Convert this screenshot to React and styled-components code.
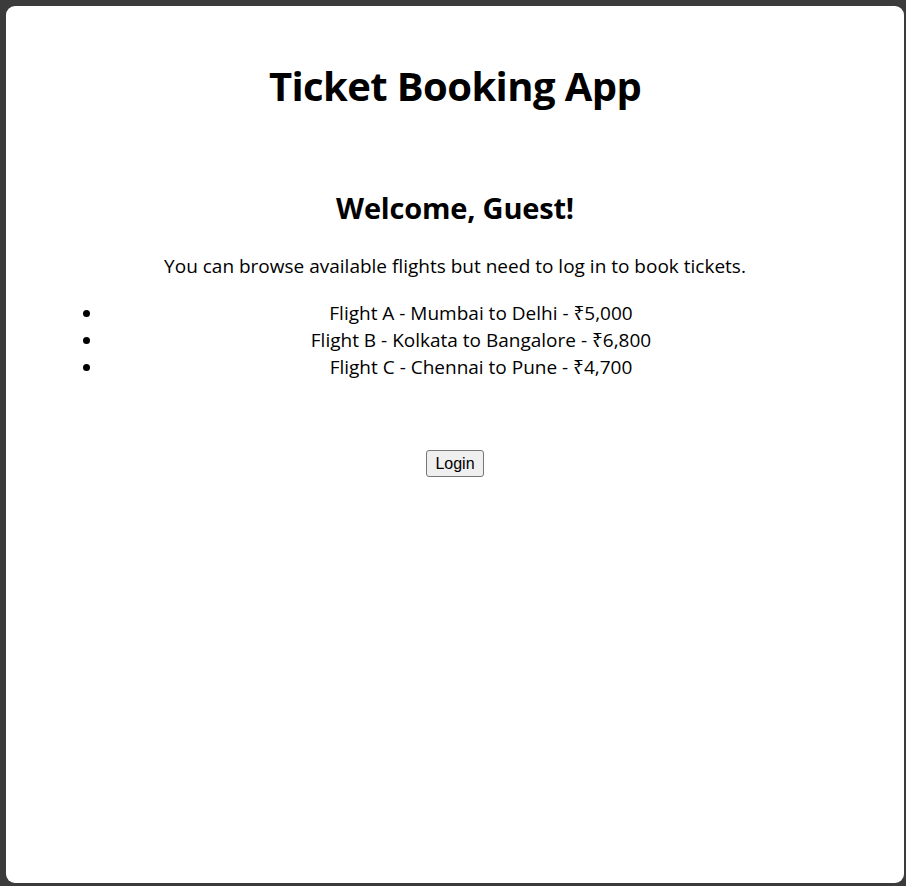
import React from "react";
import styled, { createGlobalStyle } from "styled-components";

const Global = createGlobalStyle`
  html, body { margin: 0; padding: 0; background: #3b3b3b; }
  #root { display: block; }
`;

const Frame = styled.div`
  box-sizing: border-box;
  width: 906px;
  height: 886px;
  padding: 6px 2px 3px 6px;
  background: #3b3b3b;
`;

const Panel = styled.main`
  box-sizing: border-box;
  height: 100%;
  background: #ffffff;
  border-radius: 9px;
  padding-top: 56px;
  text-align: center;
  color: #000;
  font-family: "Open Sans", "Noto Sans", sans-serif;
  overflow: hidden;
`;

const Title = styled.h1`
  margin: 0;
  font-size: 40px;
  line-height: 48px;
  font-weight: 700;
  letter-spacing: -0.6px;
`;

const Welcome = styled.h2`
  margin: 80px 0 0;
  font-size: 29px;
  line-height: 36px;
  font-weight: 700;
  letter-spacing: -0.2px;
`;

const Note = styled.p`
  margin: 27px 0 0;
  font-size: 19px;
  line-height: 27px;
`;

const FlightList = styled.ul`
  margin: 20px 0 0;
  padding: 0 45px 0 97px;
  list-style: disc outside;
  font-size: 19px;
  line-height: 27px;
`;

const Flight = styled.li`
  height: 27px;
`;

const LoginButton = styled.button`
  margin-top: 69px;
  font-family: "Liberation Sans", Arial, sans-serif;
  font-size: 16px;
  line-height: 19px;
  padding: 3px 8px;
  color: #000;
  background: #efefef;
  border: 1px solid #767676;
  border-radius: 3px;
`;

const flights = [
  "Flight A - Mumbai to Delhi - ₹5,000",
  "Flight B - Kolkata to Bangalore - ₹6,800",
  "Flight C - Chennai to Pune - ₹4,700",
];

export default function App() {
  return (
    <Frame>
      <Global />
      <Panel>
        <Title>Ticket Booking App</Title>
        <Welcome>Welcome, Guest!</Welcome>
        <Note>You can browse available flights but need to log in to book tickets.</Note>
        <FlightList>
          {flights.map((f) => (
            <Flight key={f}>{f}</Flight>
          ))}
        </FlightList>
        <LoginButton>Login</LoginButton>
      </Panel>
    </Frame>
  );
}
